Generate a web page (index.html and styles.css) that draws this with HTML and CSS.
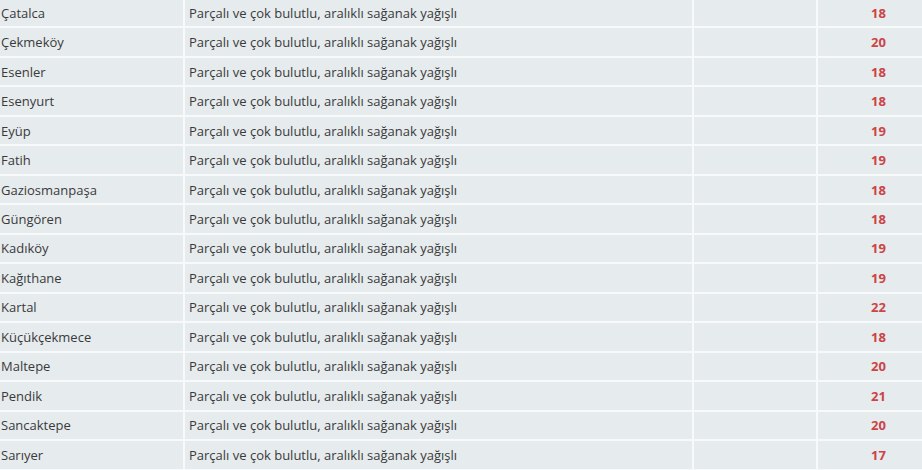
FILE: index.html
```html
<!DOCTYPE html>
<html lang="tr">
<head>
    <meta charset="UTF-8">
    <meta name="viewport" content="width=device-width, initial-scale=1.0">
    <title>İstanbul Hava Durumu</title>
    <link rel="stylesheet" href="styles.css">
</head>
<body>
    <table class="weather-table">
        <tbody id="weatherRows"></tbody>
    </table>

    <script>
        const districts = [
            ['Çatalca', 18], ['Çekmeköy', 20], ['Esenler', 18], ['Esenyurt', 18],
            ['Eyüp', 19], ['Fatih', 19], ['Gaziosmanpaşa', 18], ['Güngören', 18],
            ['Kadıköy', 19], ['Kağıthane', 19], ['Kartal', 22], ['Küçükçekmece', 18],
            ['Maltepe', 20], ['Pendik', 21], ['Sancaktepe', 20], ['Sarıyer', 17]
        ];
        const rows = document.getElementById('weatherRows');
        districts.forEach(([name, temp]) => {
            const tr = document.createElement('tr');
            tr.innerHTML = `
                <td class="district">${name}</td>
                <td class="desc">Parçalı ve çok bulutlu, aralıklı sağanak yağışlı</td>
                <td class="icon"></td>
                <td class="temp">${temp}</td>
            `;
            rows.appendChild(tr);
        });
    </script>
</body>
</html>
```

FILE: styles.css
```css
body {
    margin: 0;
    background-color: #e6ebee;
    font-family: "Open Sans", Arial, sans-serif;
    font-size: 13px;
    color: #3a3a3a;
    overflow: hidden;
}
.weather-table {
    width: 942px;
    margin-top: -1px;
    margin-left: -1px;
    border-collapse: collapse;
    table-layout: fixed;
}
.weather-table td {
    height: 27.47px;
    padding: 0;
    border-bottom: 2px solid #f7f9fa;
    border-right: 2px solid #f7f9fa;
    vertical-align: middle;
    white-space: nowrap;
}
.weather-table .district {
    width: 182px;
    padding-left: 2px;
}
.weather-table .desc {
    width: 503px;
    padding-left: 4px;
}
.weather-table .icon {
    width: 122px;
}
.weather-table .temp {
    text-align: center;
    font-weight: bold;
    color: #cc4444;
}
```
